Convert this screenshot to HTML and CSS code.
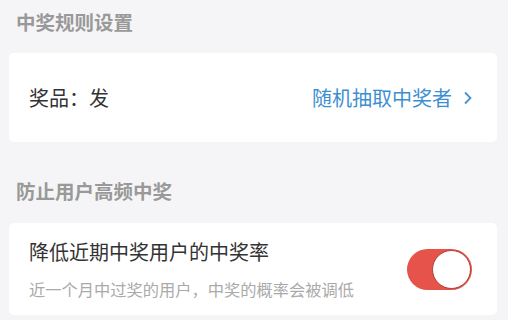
FILE: index.html
```html
<!DOCTYPE html>
<html lang="zh">
<head>
    <meta charset="UTF-8">
    <title>中奖规则设置</title>
    <link rel="stylesheet" href="styles.css">
</head>
<body>
    <div class="page">
        <div class="section-title">中奖规则设置</div>
        <div class="card row">
            <div class="label">奖品：发</div>
            <div class="link">
                随机抽取中奖者
                <svg class="chevron" width="10" height="14" viewBox="0 0 10 14">
                    <path d="M2 1.5 L7.5 7 L2 12.5" fill="none" stroke="#4a90d0" stroke-width="1.8"/>
                </svg>
            </div>
        </div>

        <div class="section-title second">防止用户高频中奖</div>
        <div class="card row tall">
            <div>
                <div class="label">降低近期中奖用户的中奖率</div>
                <div class="hint">近一个月中过奖的用户，中奖的概率会被调低</div>
            </div>
            <div class="switch on">
                <div class="knob"></div>
            </div>
        </div>
    </div>
</body>
</html>
```

FILE: styles.css
```css
body {
    margin: 0;
    background-color: #f5f5f7;
    font-family: "Noto Sans CJK SC", "Noto Sans", sans-serif;
}
.page {
    width: 488px;
    padding: 8px 11px 0 9px;
}
.section-title {
    font-size: 19.5px;
    font-weight: bold;
    color: #999999;
    padding-left: 7px;
    line-height: 28px;
    height: 45px;
}
.section-title.second {
    margin-top: 35px;
    height: 46px;
}
.card {
    background-color: #ffffff;
    border-radius: 5px;
}
.row {
    display: flex;
    justify-content: space-between;
    align-items: center;
    height: 89px;
    padding: 0 24px 0 20px;
}
.row.tall {
    height: 92px;
    padding-right: 25px;
}
.label {
    font-size: 20px;
    color: #333333;
    line-height: 28px;
}
.hint {
    font-size: 16.25px;
    color: #aaaaaa;
    margin-top: 12px;
    line-height: 22px;
}
.link {
    font-size: 20px;
    color: #3d8fd1;
    display: flex;
    align-items: center;
    gap: 11px;
    line-height: 28px;
}
.switch {
    width: 65px;
    height: 41px;
    border-radius: 21px;
    background-color: #e5534b;
    position: relative;
}
.knob {
    position: absolute;
    right: 1px;
    top: 1px;
    width: 37px;
    height: 37px;
    border-radius: 50%;
    background-color: #ffffff;
    border: 1px solid #b23a33;
}
```
